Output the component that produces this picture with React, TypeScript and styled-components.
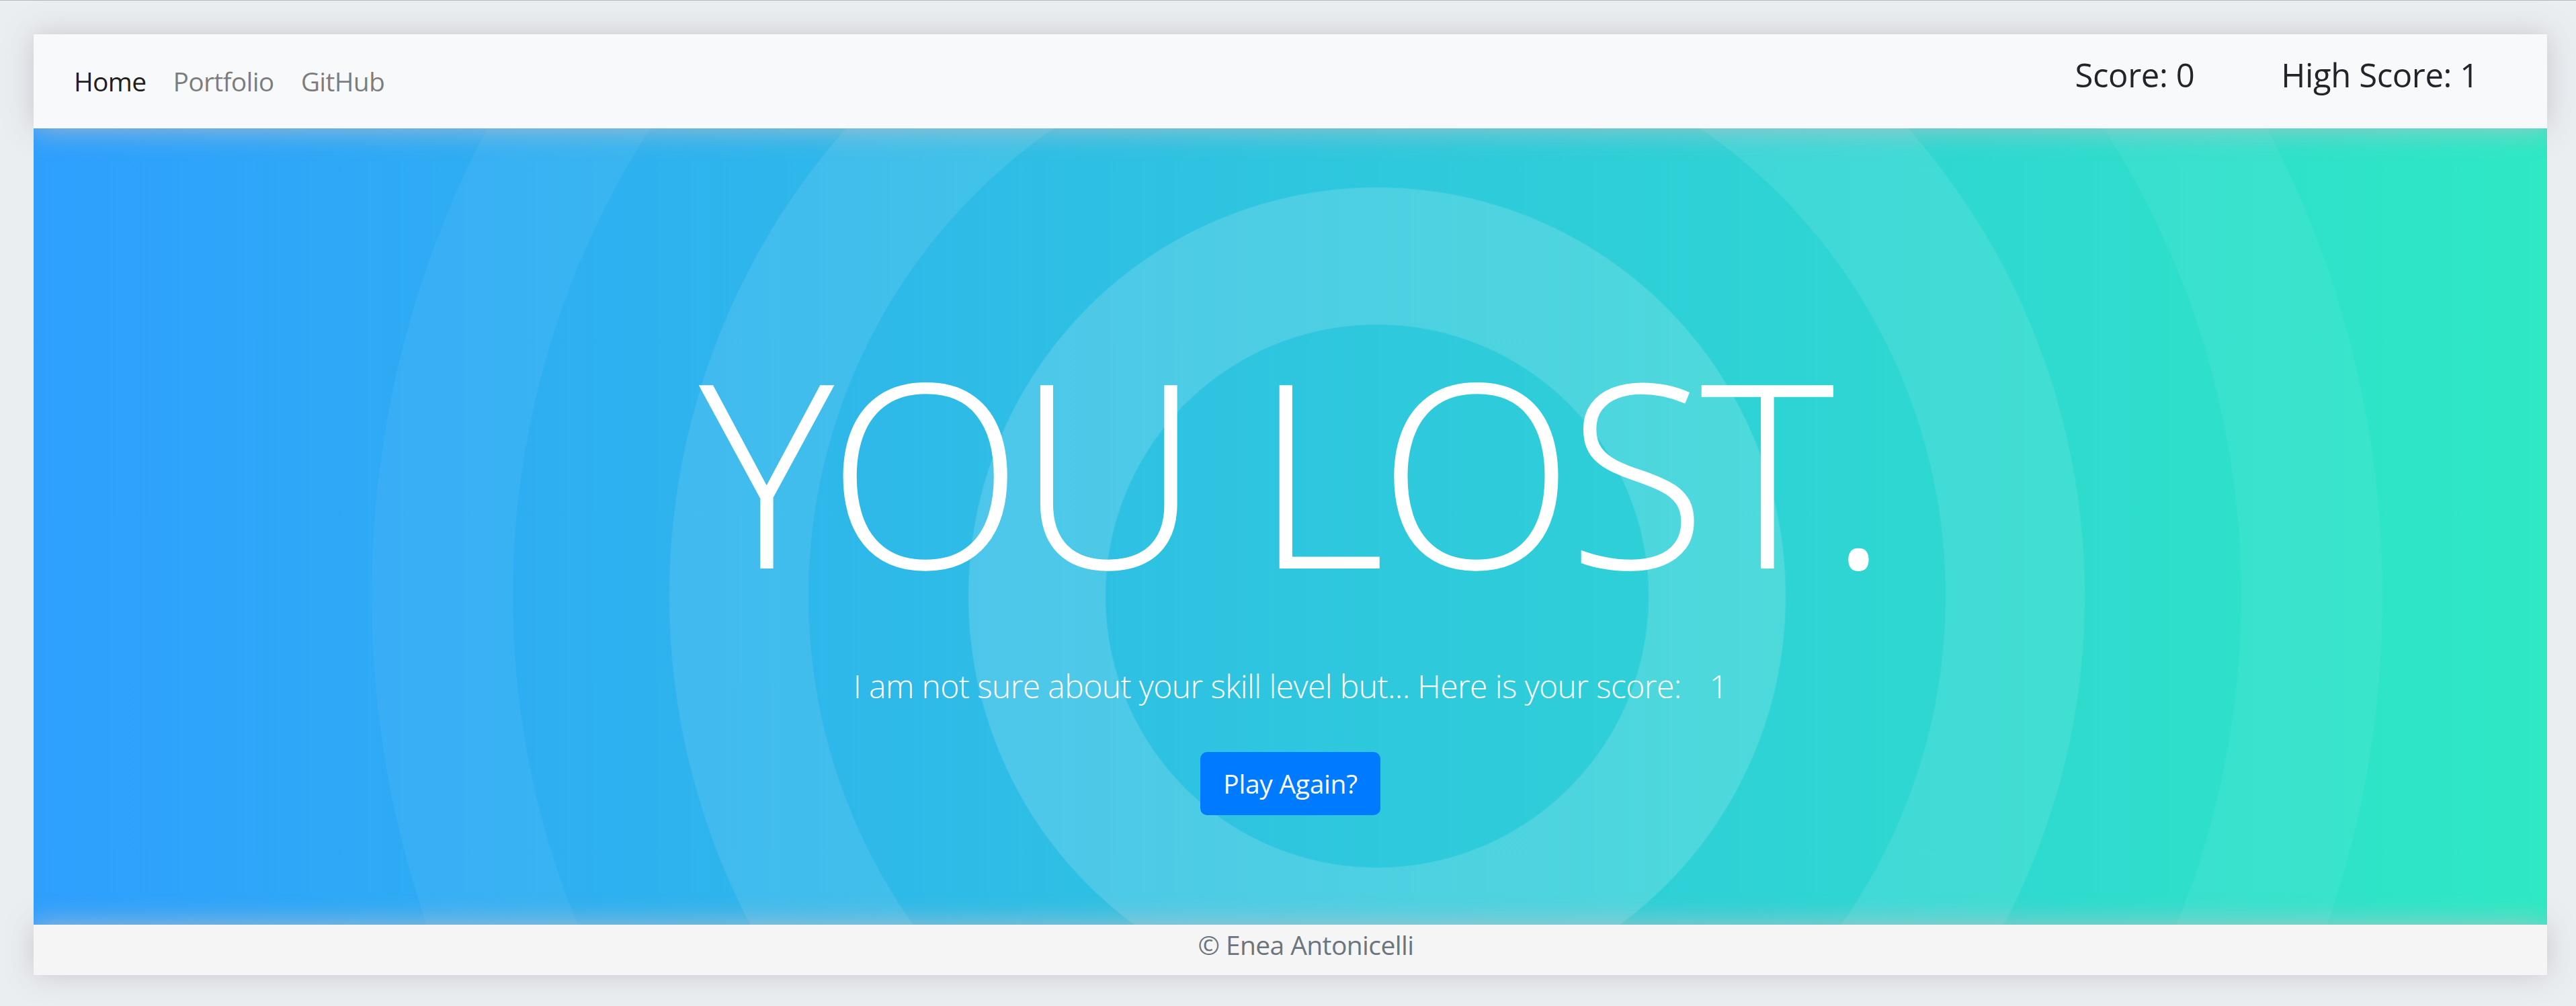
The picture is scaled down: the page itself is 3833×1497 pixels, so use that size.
import React from "react";
import styled, { createGlobalStyle } from "styled-components";

const GlobalStyle = createGlobalStyle`
  html, body {
    margin: 0;
    padding: 0;
  }
  body {
    background: #ebeef1;
    border-top: 1px solid #b7b9bf;
    font-family: "Open Sans", "Noto Sans", sans-serif;
    color: #212529;
  }
  * { box-sizing: border-box; }
`;

const Page = styled.div`
  padding: 50px 43px 46px 50px;
`;

const Card = styled.div`
  display: flex;
  flex-direction: column;
  width: 3740px;
`;

const Navbar = styled.nav`
  position: relative;
  z-index: 2;
  display: flex;
  align-items: center;
  justify-content: space-between;
  height: 140px;
  padding: 20px 40px;
  background: #f8f9fa;
  box-shadow: 0 0 40px rgba(190, 190, 198, 0.85);
`;

const NavList = styled.div`
  display: flex;
  align-items: center;
`;

const NavLink = styled.a<{ $active?: boolean }>`
  display: block;
  padding: 20px 20px;
  font-size: 39px;
  line-height: 60px;
  letter-spacing: -0.7px;
  color: ${(p) => (p.$active ? "rgba(0,0,0,0.9)" : "rgba(0,0,0,0.5)")};
  text-decoration: none;
  cursor: pointer;
`;

const Scores = styled.div`
  display: flex;
  align-items: center;
  gap: 129px;
  padding-right: 62px;
`;

const ScoreText = styled.h5`
  margin: 0 0 20px 0;
  font-size: 49px;
  line-height: 60px;
  letter-spacing: -0.4px;
  font-weight: 500;
  color: #212529;
`;

const Banner = styled.main`
  position: relative;
  z-index: 1;
  height: 1185px;
  display: flex;
  flex-direction: column;
  align-items: center;
  padding-top: 272px;
  color: #fff;
  background:
    radial-gradient(
      circle at 1999px 696px,
      rgba(255, 255, 255, 0) 403px,
      rgba(255, 255, 255, 0.15) 405px,
      rgba(255, 255, 255, 0.15) 607px,
      rgba(255, 255, 255, 0) 609px,
      rgba(255, 255, 255, 0) 845px,
      rgba(255, 255, 255, 0.09) 847px,
      rgba(255, 255, 255, 0.09) 1052px,
      rgba(255, 255, 255, 0) 1054px,
      rgba(255, 255, 255, 0) 1285px,
      rgba(255, 255, 255, 0.05) 1287px,
      rgba(255, 255, 255, 0.05) 1495px,
      rgba(255, 255, 255, 0) 1497px
    ),
    linear-gradient(90deg, #2e9ffe 0%, #2ec6df 50%, #2ee9c4 100%);
`;

const Headline = styled.h1`
  margin: 0;
  font-size: 382px;
  line-height: 470px;
  letter-spacing: -10.5px;
  font-weight: 300;
  color: #fff;
  white-space: nowrap;
`;

const Lead = styled.p`
  margin: 50px 0 0 0;
  font-size: 48px;
  line-height: 75px;
  letter-spacing: -0.6px;
  font-weight: 300;
  color: #fff;
  white-space: nowrap;
`;

const ScoreValue = styled.span`
  margin-left: 42px;
`;

const Button = styled.button`
  margin-top: 61px;
  padding: 15px 32px;
  font-family: inherit;
  font-size: 39px;
  line-height: 60px;
  letter-spacing: -0.3px;
  font-weight: 400;
  color: #fff;
  background: #007bff;
  border: 2.5px solid #007bff;
  border-radius: 10px;
  cursor: pointer;
`;

const Footer = styled.footer`
  position: relative;
  z-index: 2;
  height: 75px;
  padding-left: 46px;
  background: #f5f5f5;
  text-align: center;
  font-size: 39px;
  line-height: 60px;
  letter-spacing: -0.6px;
  color: #6c757d;
  box-shadow: 0 0 40px rgba(190, 190, 198, 0.85);
`;

export default function App() {
  return (
    <>
      <GlobalStyle />
      <Page>
        <Card>
          <Navbar>
            <NavList>
              <NavLink $active>Home</NavLink>
              <NavLink>Portfolio</NavLink>
              <NavLink>GitHub</NavLink>
            </NavList>
            <Scores>
              <ScoreText>Score: 0</ScoreText>
              <ScoreText>High Score: 1</ScoreText>
            </Scores>
          </Navbar>
          <Banner>
            <Headline>YOU LOST.</Headline>
            <Lead>
              I am not sure about your skill level but... Here is your score:
              <ScoreValue>1</ScoreValue>
            </Lead>
            <Button>Play Again?</Button>
          </Banner>
          <Footer>© Enea Antonicelli</Footer>
        </Card>
      </Page>
    </>
  );
}
